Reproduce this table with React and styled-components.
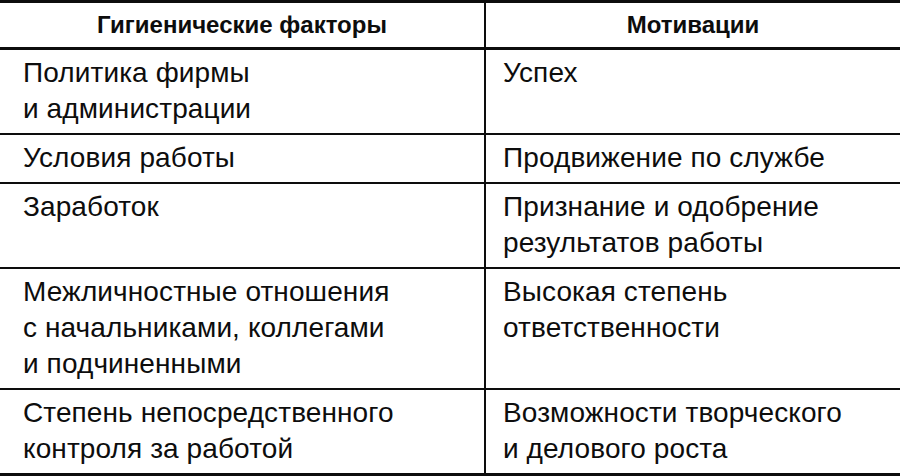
import React from "react";
import styled, { createGlobalStyle } from "styled-components";

const Global = createGlobalStyle`
  html, body { margin: 0; padding: 0; background: #fff; }
  body { font-family: "Liberation Sans", Arial, sans-serif; color: #0d0d0d; }
`;

const Table = styled.div`
  width: 900px;
  display: grid;
  grid-template-columns: 486px 1fr;
  border-top: 3px solid #0d0d0d;
  border-bottom: 3px solid #0d0d0d;
`;

const Head = styled.div`
  font-weight: 700;
  font-size: 24px;
  line-height: 36px;
  text-align: center;
  padding: 4px 0;
  border-bottom: 3px solid #0d0d0d;
  border-right: ${(p) => (p.$first ? "2px solid #0d0d0d" : "none")};
`;

const Cell = styled.div`
  font-size: 28px;
  line-height: 36px;
  letter-spacing: 0.1px;
  padding: 5px 0 6px ${(p) => (p.$first ? "23px" : "17px")};
  border-right: ${(p) => (p.$first ? "2px solid #0d0d0d" : "none")};
  border-bottom: ${(p) => (p.$last ? "none" : "2px solid #0d0d0d")};
`;

const rows = [
  [["Политика фирмы", "и администрации"], ["Успех"]],
  [["Условия работы"], ["Продвижение по службе"]],
  [["Заработок"], ["Признание и одобрение", "результатов работы"]],
  [
    ["Межличностные отношения", "с начальниками, коллегами", "и подчиненными"],
    ["Высокая степень", "ответственности"],
  ],
  [["Степень непосредственного", "контроля за работой"], ["Возможности творческого", "и делового роста"]],
];

const Lines = ({ lines }) =>
  lines.map((l, i) => (
    <React.Fragment key={i}>
      {l}
      {i < lines.length - 1 && <br />}
    </React.Fragment>
  ));

export default function App() {
  return (
    <>
      <Global />
      <Table>
        <Head $first>Гигиенические факторы</Head>
        <Head>Мотивации</Head>
        {rows.map((r, i) => (
          <React.Fragment key={i}>
            <Cell $first $last={i === rows.length - 1}>
              <Lines lines={r[0]} />
            </Cell>
            <Cell $last={i === rows.length - 1}>
              <Lines lines={r[1]} />
            </Cell>
          </React.Fragment>
        ))}
      </Table>
    </>
  );
}
